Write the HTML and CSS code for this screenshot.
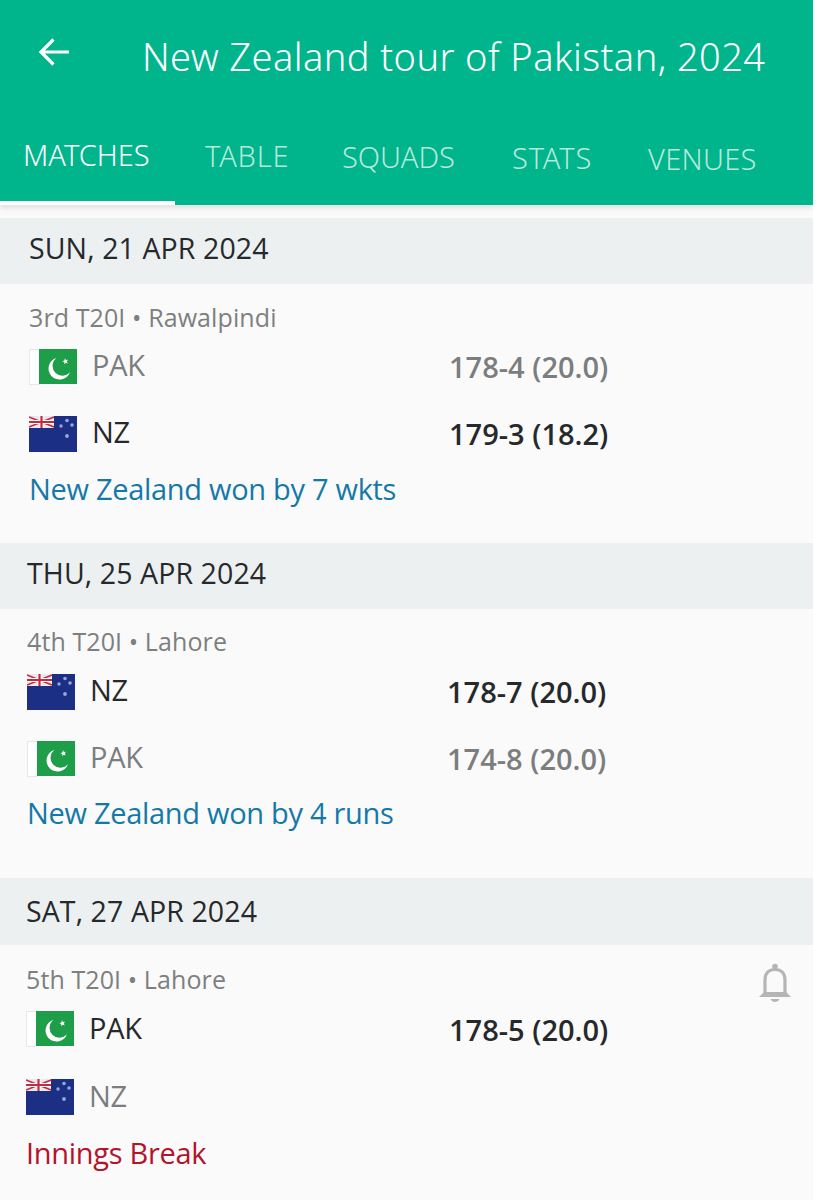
FILE: index.html
```html
<!DOCTYPE html>
<html lang="en">
  <head>
    <meta charset="UTF-8" />
    <meta name="viewport" content="width=device-width, initial-scale=1.0" />
    <title>New Zealand tour of Pakistan, 2024</title>
    <link rel="stylesheet" href="styles.css">
  </head>
  <body>
    <svg class="defs" width="0" height="0">
      <symbol id="flag-pak" viewBox="0 0 48 36">
        <rect width="48" height="36" fill="#fff"/>
        <rect x="0.5" y="0.5" width="10" height="35" fill="#fff" stroke="#e6e8e6"/>
        <rect x="10" width="38" height="35" fill="#1e9e49"/>
        <path d="M27.500 9A11 11 0 1 0 41 23A9.800 9.800 0 1 1 27.500 9z" fill="#fff"/>
        <path d="M36 9l.8 2.100 2.200-.3-1.300 1.700 1.100 1.900-2.100-.7-1.500 1.600.1-2.200-2-.9 2.100-.6z" fill="#fff"/>
      </symbol>
      <symbol id="flag-nz" viewBox="0 0 48 36">
        <rect width="48" height="36" fill="#1b2f85"/>
        <rect width="25" height="12" fill="#e8e8ef"/>
        <path d="M0 1l25 10M25 1L0 11" stroke="#c8283c" stroke-width="1.600"/>
        <path d="M12.500 0v12M0 6h25" stroke="#fff" stroke-width="4"/>
        <path d="M12.500 0v12M0 6h25" stroke="#c8283c" stroke-width="2.200"/>
        <g fill="#9aa6d8">
          <circle cx="38" cy="4.500" r="1.800"/>
          <circle cx="32" cy="10" r="1.700"/>
          <circle cx="43" cy="9" r="1.800"/>
          <circle cx="38" cy="20" r="1.900"/>
        </g>
      </symbol>
    </svg>

    <div class="app">
      <header class="app-header">
        <div class="title-bar">
          <svg class="back-icon" width="34" height="34" viewBox="0 0 34 34">
            <path d="M32 17H5M16.500 4.500L4 17l12.500 12.500" fill="none" stroke="#fff" stroke-width="3.200"/>
          </svg>
          <h1>New Zealand tour of Pakistan, 2024</h1>
        </div>
        <nav class="tabs">
          <a class="tab active">MATCHES</a>
          <a class="tab tab-table">TABLE</a>
          <a class="tab tab-squads">SQUADS</a>
          <a class="tab tab-stats">STATS</a>
          <a class="tab tab-venues">VENUES</a>
        </nav>
      </header>

      <section class="day day-first">
        <h2 class="day-date">SUN, 21 APR 2024</h2>
        <div class="match">
          <p class="match-meta">3rd T20I • Rawalpindi</p>
          <div class="team-row">
            <svg class="flag"><use href="#flag-pak"/></svg>
            <span class="team">PAK</span>
            <span class="score">178-4 (20.0)</span>
          </div>
          <div class="team-row winner">
            <svg class="flag"><use href="#flag-nz"/></svg>
            <span class="team">NZ</span>
            <span class="score">179-3 (18.2)</span>
          </div>
          <p class="result">New Zealand won by 7 wkts</p>
        </div>
      </section>

      <section class="day day-second">
        <h2 class="day-date">THU, 25 APR 2024</h2>
        <div class="match">
          <p class="match-meta">4th T20I • Lahore</p>
          <div class="team-row winner">
            <svg class="flag"><use href="#flag-nz"/></svg>
            <span class="team">NZ</span>
            <span class="score">178-7 (20.0)</span>
          </div>
          <div class="team-row">
            <svg class="flag"><use href="#flag-pak"/></svg>
            <span class="team">PAK</span>
            <span class="score">174-8 (20.0)</span>
          </div>
          <p class="result">New Zealand won by 4 runs</p>
        </div>
      </section>

      <section class="day day-third">
        <h2 class="day-date">SAT, 27 APR 2024</h2>
        <div class="match">
          <svg class="bell" width="36" height="40" viewBox="0 0 36 40">
            <circle cx="18" cy="3.500" r="2.800" fill="#b4b6b6"/>
            <path d="M8 31V17C8 10 12 6.500 18 6.500S28 10 28 17V31" fill="none" stroke="#b4b6b6" stroke-width="3.200"/>
            <path d="M2 34l5-5h22l5 5z" fill="#b4b6b6"/>
            <path d="M13.500 36h9c-.8 2-2.500 3-4.500 3s-3.700-1-4.500-3z" fill="#b4b6b6"/>
          </svg>
          <p class="match-meta">5th T20I • Lahore</p>
          <div class="team-row winner">
            <svg class="flag"><use href="#flag-pak"/></svg>
            <span class="team">PAK</span>
            <span class="score">178-5 (20.0)</span>
          </div>
          <div class="team-row">
            <svg class="flag"><use href="#flag-nz"/></svg>
            <span class="team">NZ</span>
          </div>
          <p class="result live">Innings Break</p>
        </div>
      </section>
    </div>
  </body>
</html>
```
FILE: styles.css
```css
* {
  box-sizing: border-box;
}

html,
body {
  height: 100%;
}

body {
  margin: 0;
  background-color: #fff;
  font-family: "Open Sans", "Noto Sans", sans-serif;
  overflow: hidden;
}

.defs {
  display: block;
  height: 0;
}

.app {
  width: 813px;
  height: 1200px;
  background-color: #fafafa;
  overflow: hidden;
}

.app-header {
  height: 205px;
  background-color: #00b48c;
  color: #fff;
  box-shadow: 0 3px 5px rgba(0, 0, 0, 0.1);
}

.title-bar {
  display: flex;
  align-items: center;
  height: 110px;
  padding-left: 37px;
}

.back-icon {
  margin-right: 71px;
  margin-bottom: 6px;
}

.title-bar h1 {
  margin: 2px 0 0;
  font-family: "Noto Sans", sans-serif;
  font-size: 38px;
  font-weight: 300;
  white-space: nowrap;
  letter-spacing: 0.4px;
}

.tabs {
  display: flex;
  height: 95px;
}

.tab {
  font-family: "Noto Sans", sans-serif;
  font-size: 29px;
  font-weight: 300;
  line-height: 40px;
  color: #b5e9dc;
  white-space: nowrap;
}

.tab.active {
  width: 175px;
  height: 95px;
  padding-top: 25px;
  padding-left: 23px;
  border-bottom: 4px solid #fff;
  color: #fff;
}

.tab-table {
  width: 138px;
  padding-top: 26px;
  padding-left: 30px;
  letter-spacing: 0.8px;
}

.tab-squads {
  width: 169px;
  padding-top: 27px;
  padding-left: 29px;
}

.tab-stats {
  width: 166px;
  padding-top: 28px;
  padding-left: 30px;
  letter-spacing: 0.8px;
}

.tab-venues {
  padding-top: 29px;
  letter-spacing: 0.3px;
}

.day-first {
  margin-top: 13px;
}

.day-second {
  margin-top: 2px;
}

.day-third {
  margin-top: 12px;
}

.day-date {
  display: flex;
  align-items: center;
  height: 66px;
  margin: 0;
  padding: 0 0 6px 29px;
  background-color: #ecf0f1;
  color: #26292b;
  font-size: 28.500px;
  font-weight: 400;
  letter-spacing: 0.1px;
}

.match {
  position: relative;
  height: 257px;
  padding: 17px 0 0 29px;
}

.day-second .day-date {
  padding-left: 27px;
}

.day-second .match {
  padding: 16px 0 0 27px;
}

.day-second .match-meta {
  margin-bottom: 1px;
}

.day-second .result {
  margin-top: 1px;
}

.day-third .day-date {
  height: 67px;
  padding: 0 0 2px 26px;
}

.day-third .match {
  padding: 18px 0 0 26px;
}

.day-third .team-row {
  height: 68px;
}

.day-third .team {
  width: 360px;
}

.match-meta {
  margin: 0;
  color: #7d7f80;
  font-size: 25px;
  line-height: 32px;
  letter-spacing: 0.1px;
}

.team-row {
  display: flex;
  align-items: center;
  height: 67px;
  color: #7b7d7e;
}

.team-row.winner {
  color: #26292b;
}

.flag {
  width: 48px;
  height: 36px;
  margin-right: 15px;
  flex-shrink: 0;
}

.team {
  width: 357px;
  font-size: 29px;
  font-weight: 400;
  letter-spacing: -0.3px;
  margin-top: -4px;
}

.score {
  font-size: 29px;
  font-weight: 600;
  letter-spacing: 0;
}

.result {
  margin: 2px 0 0;
  color: #1479a8;
  font-size: 29px;
  line-height: 40px;
  letter-spacing: -0.3px;
}

.result.live {
  color: #b2142c;
}

.bell {
  position: absolute;
  top: 18px;
  right: 20px;
}
```
